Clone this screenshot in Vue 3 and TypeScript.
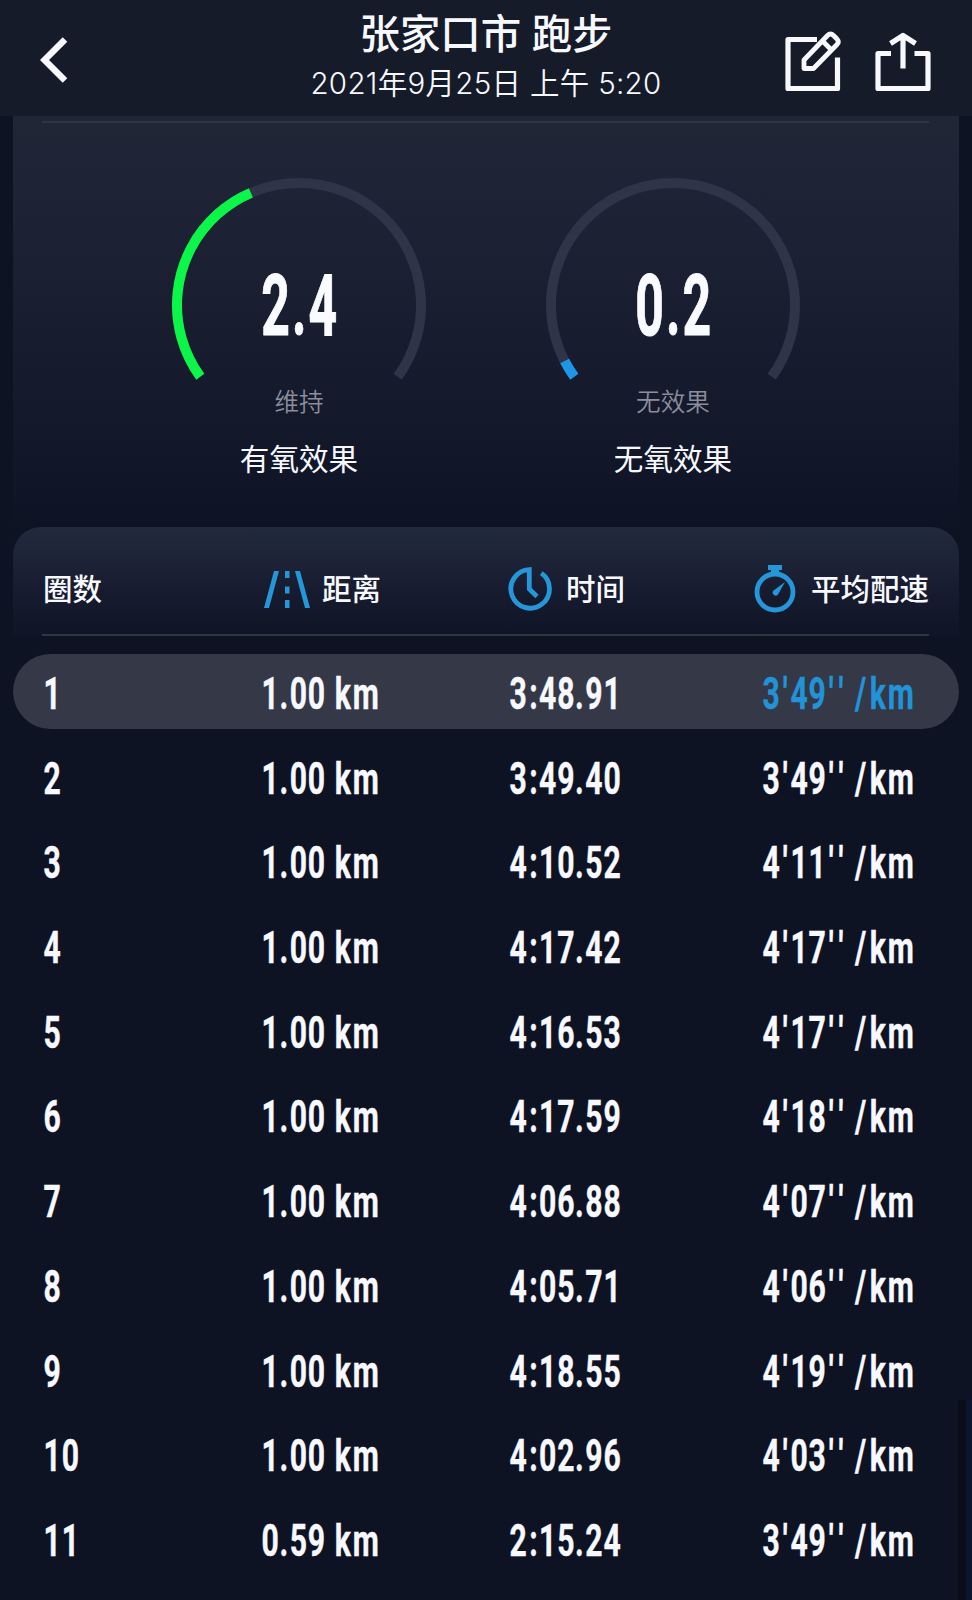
<script setup lang="ts">
interface Gauge {
  value: string
  level: string
  name: string
  sweep: number
  color: string
}

interface Lap {
  lap: string
  distance: string
  time: string
  pace: string
}

const gauges: Gauge[] = [
  { value: '2.4', level: '维持', name: '有氧效果', sweep: 102.8, color: '#0bf648' },
  { value: '0.2', level: '无效果', name: '无氧效果', sweep: 8.7, color: '#1e96e8' },
]

const raw: [string, string, string][] = [
  ['1.00', '3:48.91', `3'49''`],
  ['1.00', '3:49.40', `3'49''`],
  ['1.00', '4:10.52', `4'11''`],
  ['1.00', '4:17.42', `4'17''`],
  ['1.00', '4:16.53', `4'17''`],
  ['1.00', '4:17.59', `4'18''`],
  ['1.00', '4:06.88', `4'07''`],
  ['1.00', '4:05.71', `4'06''`],
  ['1.00', '4:18.55', `4'19''`],
  ['1.00', '4:02.96', `4'03''`],
  ['0.59', '2:15.24', `3'49''`],
]

const laps: Lap[] = raw.map(([distance, time, pace], i) => ({
  lap: String(i + 1),
  distance: `${distance} km`,
  time,
  pace: `${pace} /km`,
}))

const cells = (l: Lap): string[] => [l.lap, l.distance, l.time, l.pace]

// Condensed numerals: glyphs are narrowed horizontally and centred in these advances.
const SQUEEZE = 0.67
const advance: Record<string, number> = {
  '.': 10, ':': 11.4, "'": 9.8, ' ': 8.2, '/': 14.6, k: 18, m: 28,
}
const nudge: Record<string, number> = { '/': -0.7, ':': 0.5, '.': -0.5 }

function glyphX(text: string): string {
  let x = 0.2
  return [...text]
    .map((ch) => {
      const w = advance[ch] ?? 18.1
      const centre = x + w / 2 + (nudge[ch] ?? 0)
      x += w
      return (centre / SQUEEZE).toFixed(2)
    })
    .join(' ')
}
</script>

<template>
  <div class="screen">
    <header class="bar">
      <svg class="back" viewBox="0 0 30 46" width="30" height="46">
        <path d="M25 2.500 4.500 23 25 43.500" />
      </svg>
      <div class="titles">
        <h1>张家口市 跑步</h1>
        <p>2021年9月25日 上午 5:20</p>
      </div>
      <div class="actions">
        <svg viewBox="0 0 58 62" width="58" height="62">
          <path d="M34 9.500H5V58.500H54.500V27.500" />
          <path d="M21 38.500V30L44.500 5.500Q47.500 2.500 50.500 5.500L54 9Q56.500 12 54 14.500L30.500 38.500ZM39.500 11 48.500 20" class="pencil" />
        </svg>
        <svg viewBox="0 0 58 62" width="58" height="62">
          <path d="M18 23.500H5V58.500H55V23.500H41.500M30 38.500V6M17.500 13.500 30 5.500 42.500 13.500" />
        </svg>
      </div>
    </header>

    <section class="effects">
      <div class="rule"></div>
      <div class="gauges">
        <div v-for="g in gauges" :key="g.name" class="gauge">
          <svg viewBox="0 0 256 206" width="256" height="206">
            <path class="track" d="M29.300 199.700A122 122 0 1 1 226.700 199.700" />
            <path
              d="M29.300 199.700A122 122 0 1 1 226.700 199.700"
              :stroke="g.color"
              pathLength="252"
              :stroke-dasharray="`${g.sweep} 400`"
            />
            <text transform="translate(128 158) scale(0.58 1)" x="-40.500 0.500 41">{{ g.value }}</text>
          </svg>
          <span class="level">{{ g.level }}</span>
          <span class="name">{{ g.name }}</span>
        </div>
      </div>
    </section>

    <section class="laps">
      <div class="head">
        <div class="cols">
          <span>圈数</span>
          <span class="dist">
            <svg viewBox="0 0 46 37" width="46" height="37">
              <path d="M10 0h5L5 37H0ZM31 0h5L46 37h-5ZM21 0h4.500v7H21ZM21 15.500h4.500v7H21ZM21 29h4.500v8H21Z" />
            </svg>
            距离
          </span>
          <span class="time">
            <svg viewBox="0 0 44 44" width="44" height="44">
              <path class="line" d="M33.300 6.100A19.300 19.300 0 1 1 21.300 2.600V22L29 29.500" />
            </svg>
            时间
          </span>
          <span class="pace">
            <svg viewBox="0 0 42 48" width="42" height="48">
              <circle class="line" cx="21" cy="27" r="18" />
              <path d="M14 0h14v5h-3v4h-8V5h-3ZM31 17 24 29.500a3 3 0 1 1-4.500-4Z" />
            </svg>
            平均配速
          </span>
        </div>
        <div class="rule"></div>
      </div>

      <div class="rows">
        <div v-for="(l, i) in laps" :key="l.lap" class="row" :class="{ best: i === 0 }">
          <svg v-for="(c, j) in cells(l)" :key="j" width="170" height="75" xml:space="preserve"><text transform="translate(0 54.600) scale(0.67 1)" :x="glyphX(c)">{{ c }}</text></svg>
        </div>
      </div>
    </section>
    <div class="scroll"></div>
  </div>
</template>

<style>
body {
  background: #0e1324;
}
</style>

<style scoped>
.screen {
  position: relative;
  width: 972px;
  height: 1600px;
  overflow: hidden;
  background: #0e1324;
  color: #f7f9ff;
  font-family: "Noto Sans CJK SC", sans-serif;
}
.bar {
  height: 116px;
  display: grid;
  grid-template-columns: 240px 1fr 240px;
  background: #161b2a;
}
.bar svg {
  fill: none;
  stroke: #f7f9ff;
  stroke-width: 5.2;
  stroke-linejoin: round;
}
.bar .back {
  margin: 37px 0 0 40px;
  stroke-width: 6.5;
  stroke-linejoin: miter;
}
.titles {
  text-align: center;
  white-space: nowrap;
}
h1 {
  margin: 2px 0 0;
  font-size: 40.4px;
  line-height: 60px;
  font-weight: 500;
  word-spacing: 1.5px;
}
.titles p {
  margin: 1px 0 0;
  font: 350 29.5px/40px Inter, "Noto Sans CJK SC", sans-serif;
  letter-spacing: 0.3px;
}
.actions {
  display: flex;
  gap: 32px;
  padding: 30px 0 0 51px;
}
.bar .pencil {
  stroke-width: 4.8;
}
.rule {
  height: 2px;
  margin: 0 30px 0 29px;
  background: #303544;
}
.effects {
  height: 411px;
  margin: 0 13px;
  box-sizing: border-box;
  padding-top: 5px;
  background: linear-gradient(#212637, #1b2033 35%, #12172a 80%, #0e1324);
}
.gauges {
  display: flex;
  justify-content: center;
  gap: 118px;
  padding-top: 54px;
}
.gauge {
  width: 256px;
  display: flex;
  flex-direction: column;
  align-items: center;
}
.gauge path {
  fill: none;
  stroke-width: 10;
}
.gauge .track {
  stroke: #2f3448;
}
.gauge text {
  font: 700 86px Roboto, sans-serif;
  text-anchor: middle;
  fill: #fafbff;
  stroke: #fafbff;
  stroke-width: 1;
}
.level {
  font-size: 24.6px;
  line-height: 36px;
  margin-top: -1px;
  color: #8b8e9b;
  font-weight: 350;
}
.name {
  margin-top: 18px;
  font-size: 29.6px;
  line-height: 44px;
}
.head {
  height: 109px;
  box-sizing: border-box;
  margin: 0 13px;
  border-radius: 28px 28px 0 0;
  background: linear-gradient(#202a3c, #1f2538 22%, #171b2f 60%, #0f1426);
}
.cols {
  height: 107px;
  display: grid;
  grid-template-columns: 221px 244px 246px 1fr;
  padding: 13px 0 0 30px;
  box-sizing: border-box;
  font-size: 29.5px;
  line-height: 90px;
  font-weight: 500;
  white-space: nowrap;
}
.cols span {
  display: flex;
  align-items: center;
}
.cols svg {
  fill: #2596d8;
  position: relative;
  top: 2px;
}
.cols .line {
  fill: none;
  stroke: #2596d8;
  stroke-width: 4.8;
}
.dist svg {
  margin-right: 12px;
}
.time svg {
  margin-right: 14px;
}
.pace svg {
  margin-right: 15px;
}
.rows {
  padding-top: 18px;
}
.row {
  height: 75px;
  margin: 0 13px 9.7px;
  display: grid;
  grid-template-columns: 218.8px 247.5px 253.5px 1fr;
  padding-left: 29.7px;
  border-radius: 38px;
}
.row.best {
  background: #343847;
}
.row text {
  font: 700 45px Roboto, sans-serif;
  text-anchor: middle;
  fill: #f7f9ff;
  stroke: #f7f9ff;
  stroke-width: 0.4;
  white-space: pre;
}
.row.best svg:last-child text {
  fill: #2193d6;
  stroke: #2193d6;
}
.scroll {
  position: absolute;
  right: 0;
  bottom: 0;
  width: 14px;
  height: 200px;
  box-sizing: border-box;
  border-left: 8px solid #080d18;
  background: #0b1530;
}
</style>
